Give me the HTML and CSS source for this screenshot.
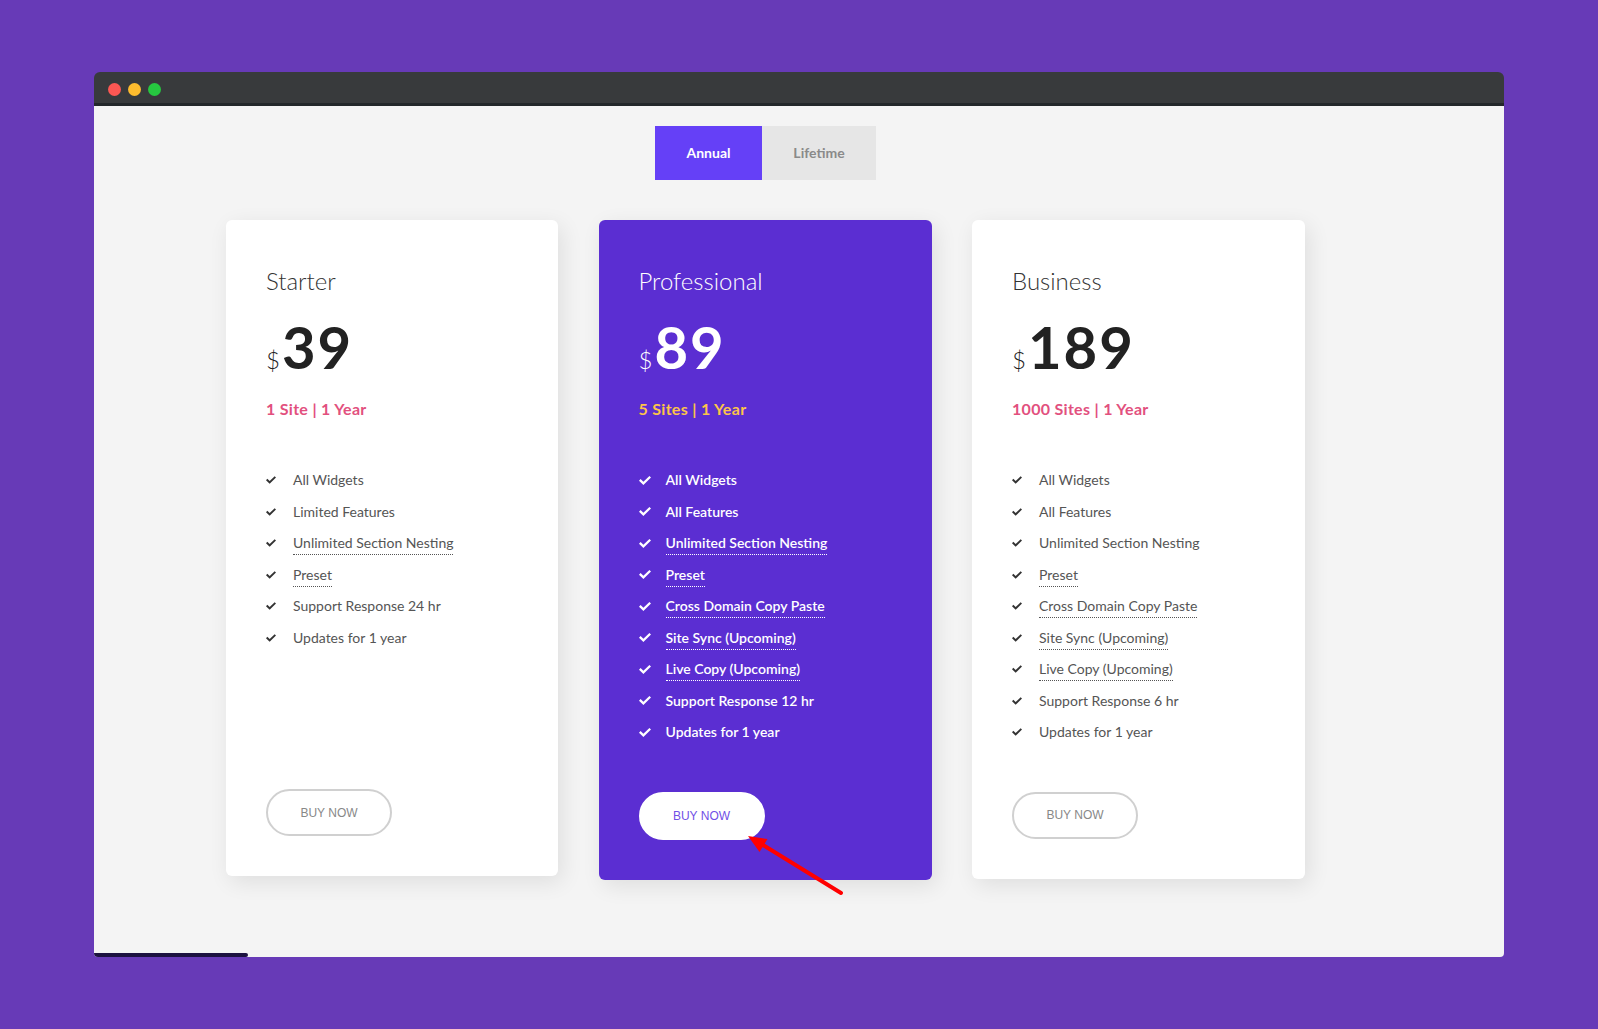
FILE: index.html
```html
<!DOCTYPE html>
<html lang="en">
<head>
    <meta charset="UTF-8">
    <meta name="viewport" content="width=device-width, initial-scale=1.0">
    <title>Pricing Plans</title>
    <link rel="stylesheet" href="styles.css">
</head>
<body>
    <div class="window">
        <div class="titlebar">
            <span class="dot dot-red"></span>
            <span class="dot dot-yellow"></span>
            <span class="dot dot-green"></span>
        </div>

        <div class="page">
            <div class="pricing">
                <div class="toggle">
                    <button class="toggle-btn active">Annual</button>
                    <button class="toggle-btn">Lifetime</button>
                </div>

                <div class="plans">
                    <!-- Starter -->
                    <div class="plan-card plan-short">
                        <div class="plan-title">Starter</div>
                        <div class="plan-price"><span class="currency">$</span><span class="amount">39</span></div>
                        <div class="plan-period">1 Site | 1 Year</div>
                        <ul class="features">
                            <li><svg class="check" viewBox="0 0 12 9"><path d="M0 4.7L1.6 3.1 4.4 5.8 10.4 0 12 1.6 4.4 9Z"/></svg><span>All Widgets</span></li>
                            <li><svg class="check" viewBox="0 0 12 9"><path d="M0 4.7L1.6 3.1 4.4 5.8 10.4 0 12 1.6 4.4 9Z"/></svg><span>Limited Features</span></li>
                            <li><svg class="check" viewBox="0 0 12 9"><path d="M0 4.7L1.6 3.1 4.4 5.8 10.4 0 12 1.6 4.4 9Z"/></svg><span class="tip">Unlimited Section Nesting</span></li>
                            <li><svg class="check" viewBox="0 0 12 9"><path d="M0 4.7L1.6 3.1 4.4 5.8 10.4 0 12 1.6 4.4 9Z"/></svg><span class="tip">Preset</span></li>
                            <li><svg class="check" viewBox="0 0 12 9"><path d="M0 4.7L1.6 3.1 4.4 5.8 10.4 0 12 1.6 4.4 9Z"/></svg><span>Support Response 24 hr</span></li>
                            <li><svg class="check" viewBox="0 0 12 9"><path d="M0 4.7L1.6 3.1 4.4 5.8 10.4 0 12 1.6 4.4 9Z"/></svg><span>Updates for 1 year</span></li>
                        </ul>
                        <a href="#" class="buy-btn">Buy Now</a>
                    </div>

                    <!-- Professional -->
                    <div class="plan-card featured">
                        <div class="plan-title">Professional</div>
                        <div class="plan-price"><span class="currency">$</span><span class="amount">89</span></div>
                        <div class="plan-period">5 Sites | 1 Year</div>
                        <ul class="features">
                            <li><svg class="check" viewBox="0 0 12 9"><path d="M0 4.7L1.6 3.1 4.4 5.8 10.4 0 12 1.6 4.4 9Z"/></svg><span>All Widgets</span></li>
                            <li><svg class="check" viewBox="0 0 12 9"><path d="M0 4.7L1.6 3.1 4.4 5.8 10.4 0 12 1.6 4.4 9Z"/></svg><span>All Features</span></li>
                            <li><svg class="check" viewBox="0 0 12 9"><path d="M0 4.7L1.6 3.1 4.4 5.8 10.4 0 12 1.6 4.4 9Z"/></svg><span class="tip">Unlimited Section Nesting</span></li>
                            <li><svg class="check" viewBox="0 0 12 9"><path d="M0 4.7L1.6 3.1 4.4 5.8 10.4 0 12 1.6 4.4 9Z"/></svg><span class="tip">Preset</span></li>
                            <li><svg class="check" viewBox="0 0 12 9"><path d="M0 4.7L1.6 3.1 4.4 5.8 10.4 0 12 1.6 4.4 9Z"/></svg><span class="tip">Cross Domain Copy Paste</span></li>
                            <li><svg class="check" viewBox="0 0 12 9"><path d="M0 4.7L1.6 3.1 4.4 5.8 10.4 0 12 1.6 4.4 9Z"/></svg><span class="tip">Site Sync (Upcoming)</span></li>
                            <li><svg class="check" viewBox="0 0 12 9"><path d="M0 4.7L1.6 3.1 4.4 5.8 10.4 0 12 1.6 4.4 9Z"/></svg><span class="tip">Live Copy (Upcoming)</span></li>
                            <li><svg class="check" viewBox="0 0 12 9"><path d="M0 4.7L1.6 3.1 4.4 5.8 10.4 0 12 1.6 4.4 9Z"/></svg><span>Support Response 12 hr</span></li>
                            <li><svg class="check" viewBox="0 0 12 9"><path d="M0 4.7L1.6 3.1 4.4 5.8 10.4 0 12 1.6 4.4 9Z"/></svg><span>Updates for 1 year</span></li>
                        </ul>
                        <a href="#" class="buy-btn">Buy Now</a>
                    </div>

                    <!-- Business -->
                    <div class="plan-card">
                        <div class="plan-title">Business</div>
                        <div class="plan-price"><span class="currency">$</span><span class="amount">189</span></div>
                        <div class="plan-period">1000 Sites | 1 Year</div>
                        <ul class="features">
                            <li><svg class="check" viewBox="0 0 12 9"><path d="M0 4.7L1.6 3.1 4.4 5.8 10.4 0 12 1.6 4.4 9Z"/></svg><span>All Widgets</span></li>
                            <li><svg class="check" viewBox="0 0 12 9"><path d="M0 4.7L1.6 3.1 4.4 5.8 10.4 0 12 1.6 4.4 9Z"/></svg><span>All Features</span></li>
                            <li><svg class="check" viewBox="0 0 12 9"><path d="M0 4.7L1.6 3.1 4.4 5.8 10.4 0 12 1.6 4.4 9Z"/></svg><span>Unlimited Section Nesting</span></li>
                            <li><svg class="check" viewBox="0 0 12 9"><path d="M0 4.7L1.6 3.1 4.4 5.8 10.4 0 12 1.6 4.4 9Z"/></svg><span class="tip">Preset</span></li>
                            <li><svg class="check" viewBox="0 0 12 9"><path d="M0 4.7L1.6 3.1 4.4 5.8 10.4 0 12 1.6 4.4 9Z"/></svg><span class="tip">Cross Domain Copy Paste</span></li>
                            <li><svg class="check" viewBox="0 0 12 9"><path d="M0 4.7L1.6 3.1 4.4 5.8 10.4 0 12 1.6 4.4 9Z"/></svg><span class="tip">Site Sync (Upcoming)</span></li>
                            <li><svg class="check" viewBox="0 0 12 9"><path d="M0 4.7L1.6 3.1 4.4 5.8 10.4 0 12 1.6 4.4 9Z"/></svg><span class="tip">Live Copy (Upcoming)</span></li>
                            <li><svg class="check" viewBox="0 0 12 9"><path d="M0 4.7L1.6 3.1 4.4 5.8 10.4 0 12 1.6 4.4 9Z"/></svg><span>Support Response 6 hr</span></li>
                            <li><svg class="check" viewBox="0 0 12 9"><path d="M0 4.7L1.6 3.1 4.4 5.8 10.4 0 12 1.6 4.4 9Z"/></svg><span>Updates for 1 year</span></li>
                        </ul>
                        <a href="#" class="buy-btn">Buy Now</a>
                    </div>
                </div>
            </div>
        </div>

        <div class="scrollbar"><div class="scroll-thumb"></div></div>
    </div>

    <!-- pointer to the highlighted button -->
    <svg class="pointer" width="106" height="70" viewBox="0 0 106 70">
        <line x1="23" y1="17" x2="101" y2="65" stroke="#ff0000" stroke-width="4" stroke-linecap="round"/>
        <polygon points="8,8 27.5,11 19.5,24" fill="#ff0000"/>
    </svg>
</body>
</html>
```

FILE: styles.css
```css
* {
    margin: 0;
    padding: 0;
    box-sizing: border-box;
}

body {
    font-family: 'Lato', 'Open Sans', sans-serif;
    background: #673ab7; /* deep purple backdrop */
    min-height: 100vh;
    padding: 72px 0 0 94px;
    position: relative;
}

.window {
    width: 1410px;
    border-radius: 6px;
}

.titlebar {
    height: 34px;
    background: #383a3c;
    border-bottom: 3px solid #23272a;
    border-radius: 6px 6px 0 0;
    display: flex;
    align-items: center;
    gap: 7px;
    padding: 3px 0 0 14px;
}

.dot {
    width: 13px;
    height: 13px;
    border-radius: 50%;
}

.dot-red { background: #fc5753; }
.dot-yellow { background: #fdbc2e; }
.dot-green { background: #26c840; }

.page {
    background: #f4f4f4;
    height: 847px;
    padding: 20px 0 0 132px;
}

.pricing {
    width: 1079px;
}

.toggle {
    display: flex;
    justify-content: center;
}

.toggle-btn {
    height: 54px;
    border: none;
    font-family: 'Lato', sans-serif;
    font-size: 14px;
    font-weight: 700;
    padding-bottom: 2px;
    background: #e6e6e6;
    color: #8a8a8a;
    width: 114px;
    cursor: pointer;
}

.toggle-btn.active {
    width: 107px;
    background: #6540f7;
    color: #fff;
}

.plans {
    display: flex;
    align-items: flex-start;
    gap: 40.5px;
    margin-top: 40px;
}

.plan-card {
    width: 333px;
    flex-shrink: 0;
    background: #fff;
    border-radius: 6px;
    padding: 46px 40px 40px;
    display: flex;
    flex-direction: column;
    align-items: flex-start;
    box-shadow: 4px 6px 22px rgba(0, 0, 0, 0.09);
}

.plan-short {
    width: 332px;
    min-height: 656px;
}

.plan-title {
    font-size: 24px;
    font-weight: 300;
    line-height: 30px;
    color: #333;
}

.plan-price {
    margin-top: 22px;
    height: 57px;
    line-height: 57px;
    color: #222;
    white-space: nowrap;
}

.currency {
    font-size: 24px;
    font-weight: 300;
    margin-right: 2px;
}

.amount {
    font-size: 58px;
    font-weight: 700;
    letter-spacing: 2px;
}

.plan-period {
    margin-top: 24px;
    font-size: 16px;
    line-height: 20px;
    font-weight: 700;
    letter-spacing: 0.3px;
    color: #e2507e;
}

.features {
    list-style: none;
    margin-top: 45px;
    flex: 1;
    align-self: stretch;
}

.features li {
    height: 31.5px;
    line-height: 31.5px;
    font-size: 14px;
    color: #555;
    white-space: nowrap;
}

.check {
    display: inline-block;
    vertical-align: middle;
    width: 10px;
    height: 8px;
    fill: #333;
    margin: -2px 17px 0 0;
}

.tip {
    padding-bottom: 3px;
    border-bottom: 1px dotted #555;
}

.buy-btn {
    margin-top: 44px;
    display: flex;
    align-items: center;
    justify-content: center;
    width: 126px;
    height: 47px;
    border: 2px solid #d0d0d0;
    border-radius: 24px;
    font-family: 'Liberation Sans', Arial, sans-serif;
    font-size: 12px;
    text-transform: uppercase;
    text-decoration: none;
    color: #888;
}

/* highlighted plan */
.featured {
    background: #5b2ed2;
}

.featured .plan-title,
.featured .plan-price {
    color: #fff;
}

.featured .plan-period {
    color: #fcc44a;
}

.featured .features li {
    color: #fff;
    font-weight: 600;
}

.featured .check {
    width: 12px;
    height: 9px;
    fill: #fff;
    margin-right: 15px;
}

.featured .tip {
    border-bottom-color: #fff;
}

.featured .buy-btn {
    background: #fff;
    border-color: #fff;
    height: 48px;
    color: #7150e6;
}

/* bottom edge of the window with the horizontal scroll thumb */
.scrollbar {
    height: 4px;
    background: #f4f4f4;
    border-radius: 0 0 6px 6px;
    overflow: hidden;
}

.scroll-thumb {
    width: 154px;
    height: 4px;
    background: #1c1240;
    border-radius: 0 3px 3px 3px;
}

.pointer {
    position: absolute;
    left: 740px;
    top: 828px;
}
```
